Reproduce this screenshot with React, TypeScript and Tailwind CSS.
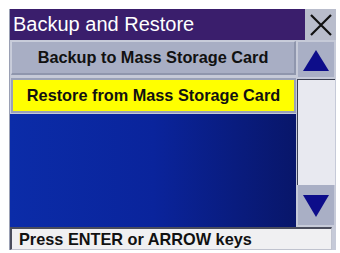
export default function App() {
  return (
    <div
      className="w-[340px] h-[253px] bg-white pt-[9px] pl-[9px] overflow-hidden"
      style={{ fontFamily: '"Liberation Sans", Arial, sans-serif' }}
    >
      <div className="w-[327px] h-[241px] bg-[#c6cad8] flex flex-col border-l border-[#9aa0b4]">
        {/* title bar */}
        <div className="flex h-[31px]">
          <div className="w-[295px] bg-[#3a1e6c] text-white text-[20px] leading-[31px] pl-[3px]">
            Backup and Restore
          </div>
          <div className="flex-1 bg-[#b9bdcc] flex items-center justify-center">
            <svg width="24" height="24" viewBox="0 0 24 24">
              <path d="M2 2 L22 22 M22 2 L2 22" stroke="#111" strokeWidth="2.2" />
            </svg>
          </div>
        </div>

        <div className="flex flex-1">
          {/* list */}
          <div className="w-[287px] flex flex-col">
            <div className="mt-[1px] ml-[1px] h-[34px] w-[285px] bg-[#a8aec4] border-t border-l border-[#c9cddb] border-b-2 border-r-2 border-b-[#8f96ad] border-r-[#8f96ad] flex items-center justify-center font-bold text-[16.3px] text-[#111]">
              Backup to Mass Storage Card
            </div>
            <div className="mt-[3px] ml-[1px] h-[35px] w-[285px] bg-[#ffff00] border-2 border-[#9aa1b8] flex items-center justify-center font-bold text-[16.3px] text-[#111]">
              Restore from Mass Storage Card
            </div>
            <div className="mt-[1px] flex-1 bg-gradient-to-r from-[#0b2ca8] via-[#0a249c] to-[#08166a]" />
          </div>

          {/* scroll bar */}
          <div className="flex-1 flex flex-col pl-[1px] pr-[2px]">
            <div className="mt-[2px] ml-[1px] h-[35px] w-[36px] bg-[#a9afc5] flex items-center justify-center">
              <svg width="28" height="24" viewBox="0 0 28 24">
                <polygon points="14,2 27,23 1,23" fill="#0d0d8a" />
              </svg>
            </div>
            <div className="mt-[2px] h-[106px] w-[38px] bg-[#e8e9f0] border-t border-l border-[#3b3f52]" />
            <div className="ml-[1px] h-[40px] w-[36px] bg-[#a9afc5] flex items-center justify-center">
              <svg width="28" height="26" viewBox="0 0 28 26">
                <polygon points="1,3 27,3 14,25" fill="#0d0d8a" />
              </svg>
            </div>
          </div>
        </div>

        {/* status bar */}
        <div className="h-[23px] w-[322px] bg-[#f0f0f2] border-t-2 border-l-2 border-[#4a4d5c] border-b border-r border-b-[#c0c3cf] border-r-[#c0c3cf] flex items-center pl-[7px] font-bold text-[16.3px] text-[#111]">
          Press ENTER or ARROW keys
        </div>
      </div>
    </div>
  );
}
